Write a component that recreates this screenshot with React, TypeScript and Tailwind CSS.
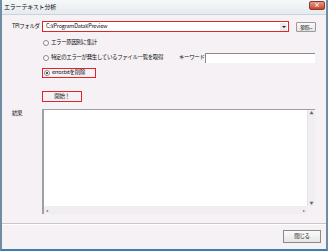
import React from 'react';

const font = { fontFamily: '"Noto Sans CJK JP", "Liberation Sans", sans-serif' };

function Radio({ checked }: Readonly<{ checked?: boolean }>) {
  return (
    <span className="w-[6px] h-[6px] rounded-full border border-[#8a8a8a] bg-white flex items-center justify-center shrink-0">
      {checked && <span className="w-[2px] h-[2px] rounded-full bg-[#222]" />}
    </span>
  );
}

export default function App() {
  return (
    <div
      className="w-[328px] h-[251px] flex flex-col bg-[#f5f1f5] border-x-2 border-b-2 border-x-[#6f8ca3] border-b-[#3a7fb0] text-[6px] leading-none text-[#111] overflow-hidden whitespace-nowrap"
      style={font}
    >
      {/* title bar */}
      <div className="h-[15px] shrink-0 flex items-center justify-between pl-[2px] pr-[1px] bg-gradient-to-b from-[#f6f8fa] to-[#e6ebef] border-b border-[#c9d3db]">
        <span className="text-[6px] tracking-[-0.2px] text-[#000]">エラーテキスト分析</span>
        <span className="w-[16px] h-[9px] -mt-[4px] rounded-[2px] bg-gradient-to-b from-[#e59a8a] to-[#c7432d] border border-[#8c3a2c] flex items-center justify-center text-white text-[6px] font-bold">
          ×
        </span>
      </div>

      <div className="flex flex-col pl-[10px] pr-[9px]">
        {/* folder row */}
        <div className="flex items-center mt-[6px] h-[11px]">
          <span className="w-[30px] text-[5.5px] tracking-[-0.4px]">TPIフォルダ</span>
          <div className="w-[247px] h-[11px] border border-[#e0242b] bg-white flex items-center justify-between pl-[3px] pr-[1px]">
            <span className="text-[5.5px] tracking-[-0.2px]">C:¥ProgramData¥Preview</span>
            <span className="w-[7px] h-[8px] bg-[#ece9ec] flex items-center justify-center">
              <span className="w-0 h-0 border-l-[2px] border-r-[2px] border-t-[2px] border-l-transparent border-r-transparent border-t-[#222]" />
            </span>
          </div>
          <div className="ml-[7px] w-[20px] h-[10px] border border-[#9a9a9a] bg-gradient-to-b from-[#fafafa] to-[#e4e4e4] rounded-[1px] flex items-center justify-center text-[5px] tracking-[-0.4px]">
            参照...
          </div>
        </div>

        {/* radios */}
        <div className="flex flex-col ml-[30px]">
          <div className="flex items-center gap-[2px] mt-[7px] h-[8px] pl-[1px]">
            <Radio />
            <span className="text-[5.5px] tracking-[-0.4px]">エラー原因別に集計</span>
          </div>
          <div className="flex items-center mt-[6px] h-[10px] pl-[1px]">
            <Radio />
            <span className="ml-[2px] w-[128px] text-[5.5px] tracking-[-0.4px]">特定のエラーが発生しているファイル一覧を取得</span>
            <span className="w-[26px] text-[5.5px] tracking-[-0.4px]">キーワード</span>
            <div className="w-[110px] h-[10px] bg-white border-l border-t border-[#8a8a8a]" />
          </div>
          <div className="mt-[5px] w-[54px] h-[10px] border border-[#e0242b] flex items-center gap-[2px] pl-[1px]">
            <Radio checked />
            <span className="text-[5.5px] tracking-[-0.3px]">error.txtを削除</span>
          </div>
          <div className="mt-[13px] w-[40px] h-[11px] border border-[#e0242b] flex items-center justify-center text-[5.5px] tracking-[-0.4px]">
            開始！
          </div>
        </div>

        {/* result */}
        <div className="flex mt-[7px]">
          <span className="w-[30px] pt-[2px] text-[5.5px] tracking-[-0.4px]">結果</span>
          <div className="w-[273px] h-[105px] border-l-2 border-t border-[#a0a0a0] bg-white flex flex-col">
            <div className="flex flex-1">
              <div className="flex-1" />
              <div className="w-[8px] bg-[#f0eef0] border-l border-[#e4e2e4] flex flex-col justify-between items-center text-[4px] text-[#666] py-[1px]">
                <span>▲</span>
                <span>▼</span>
              </div>
            </div>
            <div className="h-[8px] flex">
              <div className="flex-1 bg-[#f0eef0] flex justify-between items-center px-[2px] text-[4px] text-[#666]">
                <span>◂</span>
                <span>▸</span>
              </div>
              <div className="w-[8px] bg-[#f5f1f5]" />
            </div>
          </div>
        </div>
      </div>

      <div className="mt-[9px] h-[2px] border-t border-[#c9c6c9] border-b border-b-white" />

      <div className="flex justify-end pr-[5px] mt-[5px]">
        <div className="w-[38px] h-[13px] border border-[#8a8a8a] bg-gradient-to-b from-[#fafafa] to-[#e6e6e6] flex items-center justify-center text-[5.5px] tracking-[-0.4px]">
          閉じる
        </div>
      </div>
    </div>
  );
}
